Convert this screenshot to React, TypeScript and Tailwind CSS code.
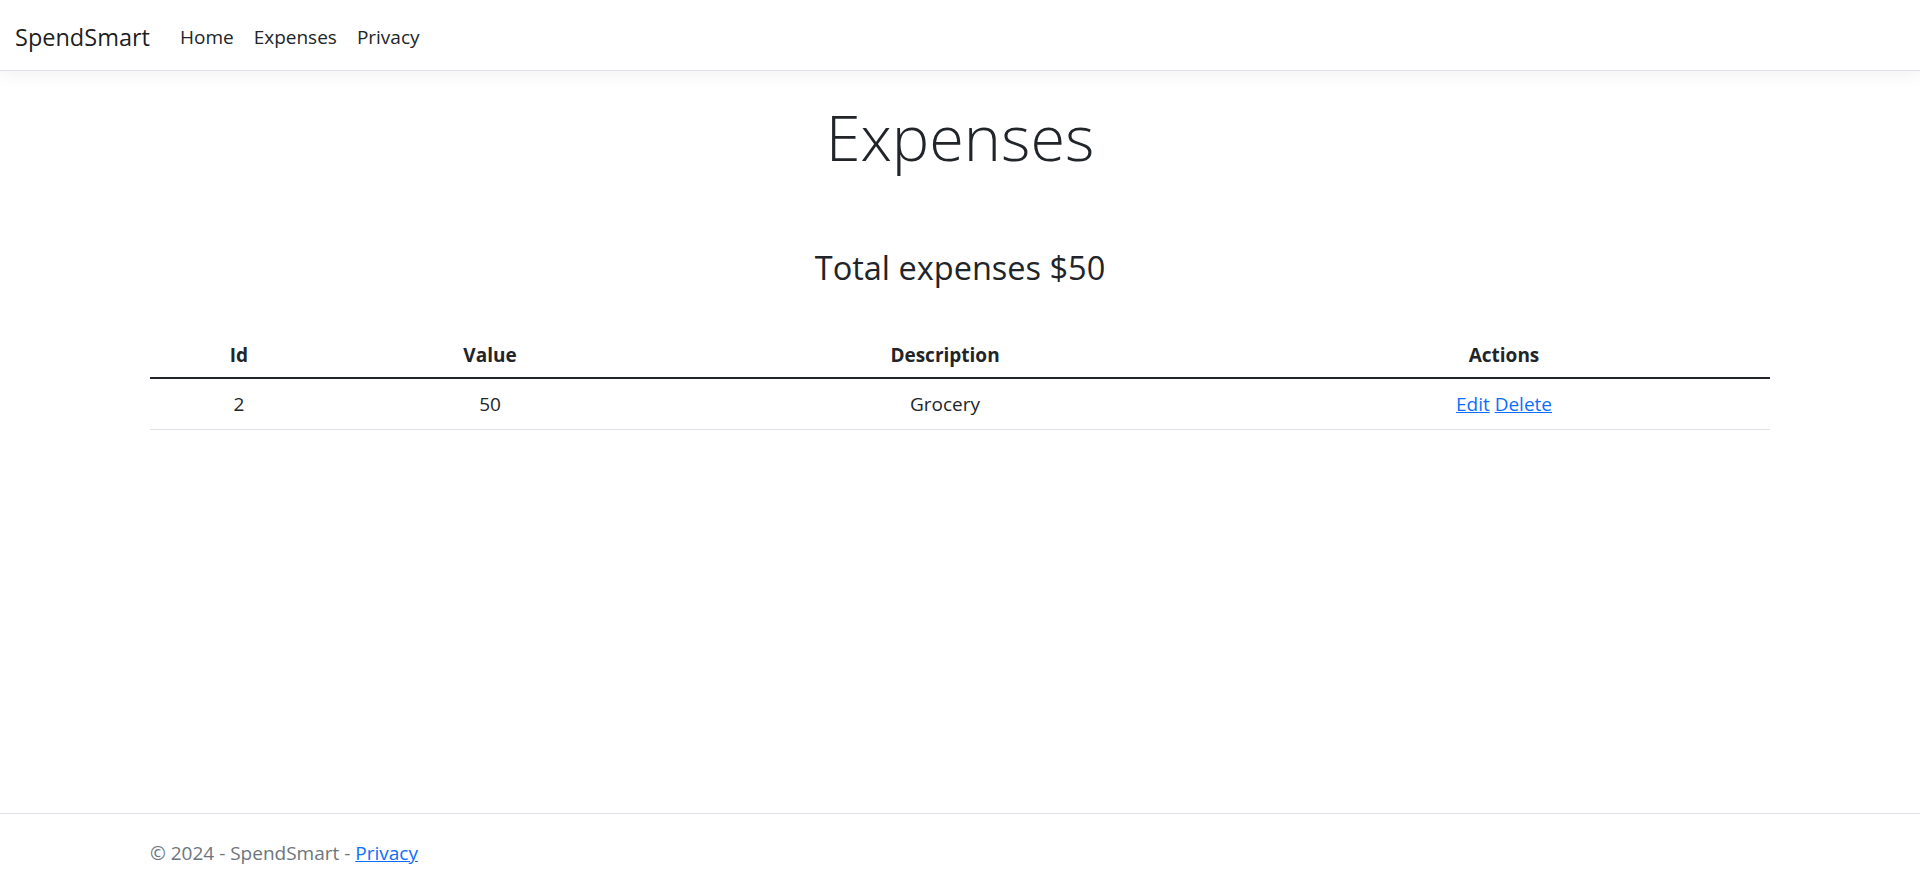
const expenses = [{ id: 2, value: 50, description: "Grocery" }];

export default function App() {
  const total = expenses.reduce((sum, e) => sum + e.value, 0);

  return (
    <div className="min-h-screen flex flex-col bg-white text-[#212529] font-['Open_Sans',sans-serif] text-[19px]">
      <header className="h-[71px] flex items-center px-[15px] pt-[4px] bg-white border-b border-[#dee2e6] shadow-[0_5px_15px_rgba(0,0,0,0.05)]">
        <a href="#" className="text-[23.5px] text-black/90 mr-[20px] leading-[37px]">SpendSmart</a>
        <nav className="flex">
          <a href="#" className="px-[10px] text-[#212529]">Home</a>
          <a href="#" className="px-[10px] text-[#212529]">Expenses</a>
          <a href="#" className="px-[10px] text-[#212529]">Privacy</a>
        </nav>
      </header>

      <main className="w-[1650px] mx-auto px-[15px] pt-[24px]">
        <div className="text-center">
          <h1 className="text-[63px] font-light leading-[84px] mb-[10px]">Expenses</h1>
          <h3 className="text-[32.5px] font-medium leading-[42px] mt-[68px] mb-[38px]">Total expenses ${total}</h3>
        </div>

        <table className="w-full border-collapse text-center">
          <thead>
            <tr className="border-b-[2px] border-[#212529]">
              <th className="w-[178px] pt-[13px] pb-[7px] font-bold leading-[30px]">Id</th>
              <th className="w-[324px] pt-[13px] pb-[7px] font-bold leading-[30px]">Value</th>
              <th className="w-[586px] pt-[13px] pb-[7px] font-bold leading-[30px]">Description</th>
              <th className="pt-[13px] pb-[7px] font-bold leading-[30px]">Actions</th>
            </tr>
          </thead>
          <tbody>
            {expenses.map((e) => (
              <tr key={e.id} className="border-b border-[#dee2e6]">
                <td className="py-[10px] leading-[30px]">{e.id}</td>
                <td className="py-[10px] leading-[30px]">{e.value}</td>
                <td className="py-[10px] leading-[30px]">{e.description}</td>
                <td className="py-[10px] leading-[30px]">
                  <a href="#" className="text-[#0d6efd] underline">Edit</a>{" "}
                  <a href="#" className="text-[#0d6efd] underline">Delete</a>
                </td>
              </tr>
            ))}
          </tbody>
        </table>
      </main>

      <footer className="mt-auto border-t border-[#dee2e6] h-[75px] text-[#6c757d] whitespace-nowrap">
        <div className="w-[1650px] mx-auto px-[15px] pt-[2px] leading-[74px]">
          &copy; 2024 - SpendSmart - <a href="#" className="text-[#0d6efd] underline">Privacy</a>
        </div>
      </footer>
    </div>
  );
}
